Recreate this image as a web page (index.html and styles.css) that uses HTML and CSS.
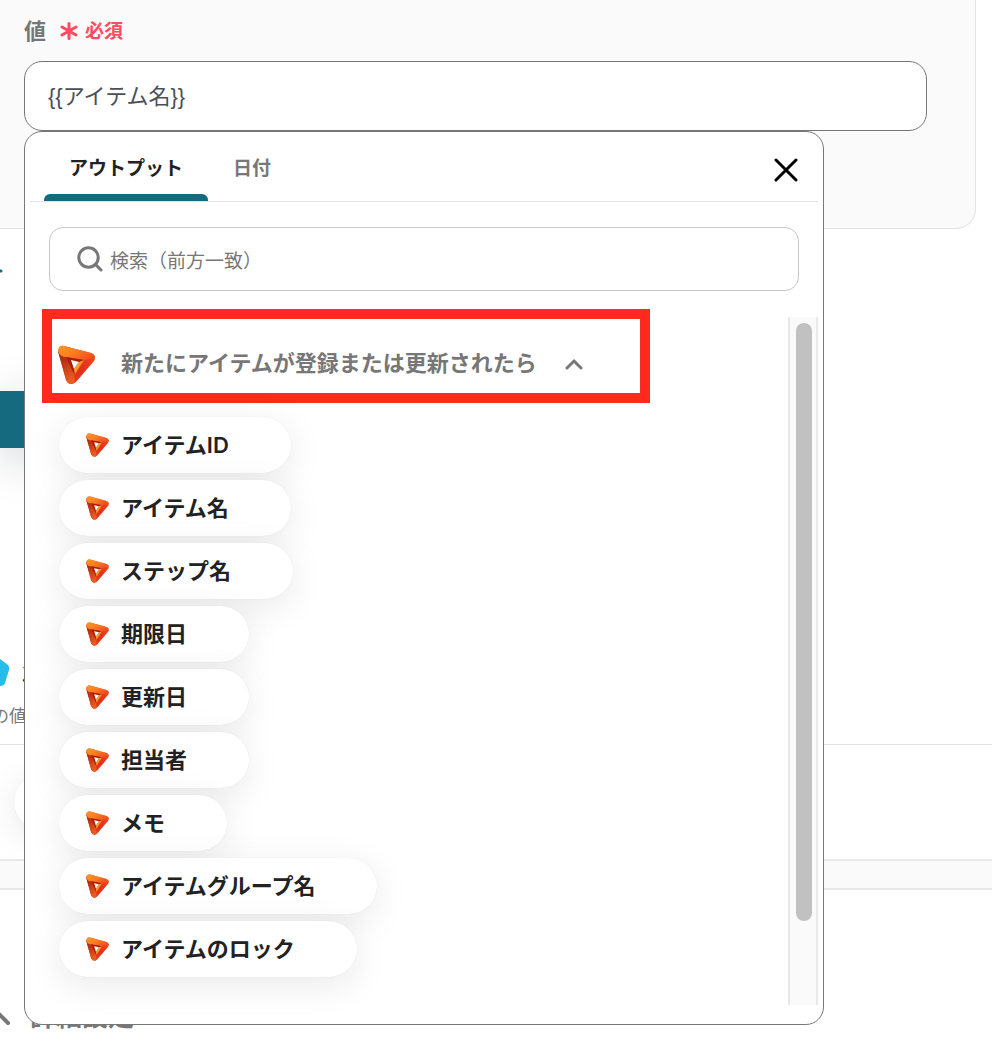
FILE: index.html
```html
<!DOCTYPE html>
<html lang="ja">
<head>
    <meta charset="UTF-8">
    <meta name="viewport" content="width=device-width, initial-scale=1.0">
    <title>アウトプット</title>
    <link rel="stylesheet" href="styles.css">
</head>
<body>
    <svg class="defs" aria-hidden="true">
        <defs>
            <linearGradient id="top" x1="0" y1="0" x2="1" y2="0.6">
                <stop offset="0" stop-color="#fb9a22"/>
                <stop offset="0.5" stop-color="#fa7f20"/>
                <stop offset="1" stop-color="#f2501f"/>
            </linearGradient>
            <linearGradient id="left" x1="0" y1="0" x2="0.3" y2="1">
                <stop offset="0" stop-color="#a81c0c"/>
                <stop offset="0.4" stop-color="#bd3313"/>
                <stop offset="1" stop-color="#e85c20"/>
            </linearGradient>
            <linearGradient id="right" x1="1" y1="0" x2="0" y2="1">
                <stop offset="0" stop-color="#f2501f"/>
                <stop offset="0.5" stop-color="#e2301b"/>
                <stop offset="1" stop-color="#e2451d"/>
            </linearGradient>
            <symbol id="logo" viewBox="0 0 39 41">
                <path d="M1 6Q2 0 7 1L34 8Q40 11 37 16L19 37Q13 42 9 35Z" fill="url(#right)"/>
                <path d="M1 6L9 11L17 28L18 37Q12 42 9 35Z" fill="url(#left)"/>
                <path d="M1 6Q2 0 7 1L34 8Q38 9 38 13L27 15L9 12Q3 12 1 6Z" fill="url(#top)"/>
                <path d="M9 12L27 15L23 18L14 15L17 24L17 29Z" fill="#a81e0d"/>
                <path d="M14 15L22 17L17 24Z" fill="#fff"/>
                <path d="M27 15L18 29L17 24L22 17Z" fill="#f99b28"/>
            </symbol>
        </defs>
    </svg>

    <section class="card">
        <div class="label">
            <label for="value">値</label>
            <svg class="star" viewBox="0 0 18 18"><path d="M9 1.5V16.5M2 5l14 8M16 5L2 13"/></svg>
            <span class="required">必須</span>
        </div>
        <div class="field">
            <input id="value" class="value" type="text" value="{{アイテム名}}">

            <div class="dropdown">
                <div class="tabs">
                    <button class="tab active" type="button">アウトプット</button>
                    <button class="tab" type="button">日付</button>
                    <button class="close" type="button" aria-label="閉じる">
                        <svg viewBox="0 0 24 24"><path d="M2 2L22 22M22 2L2 22"/></svg>
                    </button>
                </div>
                <label class="search">
                    <svg viewBox="0 0 26 26"><circle cx="11.5" cy="11.5" r="9.7"/><path d="M18.5 18.5L24 24"/></svg>
                    <input type="text" placeholder="検索（前方一致）" aria-label="検索">
                </label>
                <div class="outputs">
                    <div class="list">
                        <button class="group" type="button">
                            <svg class="group-logo"><use href="#logo"/></svg>
                            <span>新たにアイテムが登録または更新されたら</span>
                            <svg class="chevron" viewBox="0 0 18 12"><path d="M2 10L9 3L16 10"/></svg>
                        </button>
                        <div class="items">
                            <button class="item" type="button"><svg><use href="#logo"/></svg><span>アイテムID</span></button>
                            <button class="item" type="button"><svg><use href="#logo"/></svg><span>アイテム名</span></button>
                            <button class="item" type="button"><svg><use href="#logo"/></svg><span>ステップ名</span></button>
                            <button class="item" type="button"><svg><use href="#logo"/></svg><span>期限日</span></button>
                            <button class="item" type="button"><svg><use href="#logo"/></svg><span>更新日</span></button>
                            <button class="item" type="button"><svg><use href="#logo"/></svg><span>担当者</span></button>
                            <button class="item" type="button"><svg><use href="#logo"/></svg><span>メモ</span></button>
                            <button class="item" type="button"><svg><use href="#logo"/></svg><span>アイテムグループ名</span></button>
                            <button class="item" type="button"><svg><use href="#logo"/></svg><span>アイテムのロック</span></button>
                        </div>
                    </div>
                    <div class="track"><div class="thumb"></div></div>
                </div>
            </div>
        </div>
    </section>

    <section class="actions">
        <svg class="add" viewBox="0 0 3 4"><path d="M0 2H1"/></svg>
        <button class="save" type="button" aria-label="保存"></button>
    </section>
    <section class="operation">
        <div class="operation-title">
            <svg class="badge" viewBox="0 0 10 30"><path d="M0 1L8 7Q10 9 9 12L5 25Q4 28 0 28Z"/></svg>
            <span>次</span>
        </div>
        <p class="note">の値</p>
    </section>
    <section class="step">
        <div class="pill"></div>
    </section>
    <div class="divider"></div>
    <section class="details">
        <svg viewBox="0 0 12 20"><path d="M-4 4L8 16"/></svg>
        <h2>詳細設定</h2>
    </section>
</body>
</html>
```
FILE: styles.css
```css
* {
    box-sizing: border-box;
}
body {
    margin: 0;
    background-color: #fff;
    color: #222;
    font-family: "Liberation Sans", "Noto Sans CJK JP", sans-serif;
    overflow-x: hidden;
}
button, input {
    font-family: inherit;
}
button {
    border: none;
    background: none;
    cursor: pointer;
}
.defs {
    position: absolute;
    width: 0;
    height: 0;
}

/* value field */
.card {
    height: 229px;
    margin-right: 16px;
    padding: 12px 48px 0 24px;
    background-color: #fafafa;
    border: 1px solid #e3e3e3;
    border-width: 0 1px 1px 0;
    border-radius: 0 0 20px 0;
}
.label {
    display: flex;
    align-items: center;
    height: 34px;
    margin-bottom: 15px;
    color: #777;
    font-size: 22px;
    font-weight: bold;
}
.star {
    width: 18px;
    height: 18px;
    margin: 4px 7px 0 14px;
    fill: none;
    stroke: #ff4b5f;
    stroke-width: 3;
    stroke-linecap: round;
}
.required {
    color: #ff4b5f;
    font-size: 19px;
}
.field {
    position: relative;
}
.value {
    display: block;
    width: 100%;
    height: 70px;
    padding: 0 23px 5px;
    border: 1px solid #777;
    border-radius: 18px;
    background-color: #fff;
    color: #4a5058;
    font-size: 22px;
}

/* dropdown */
.dropdown {
    position: absolute;
    top: 100%;
    left: 0;
    z-index: 1;
    width: 100%;
    max-width: 800px;
    padding: 0 5px 19px;
    background-color: #fff;
    border: 1px solid #777;
    border-radius: 18px;
}
.tabs {
    display: flex;
    height: 70px;
    padding: 0 16px 0 14px;
    border-bottom: 1px solid #e3e3e3;
}
.tab {
    display: flex;
    flex-direction: column;
    justify-content: space-between;
    padding: 21px 25px 0;
    color: #777;
    font-size: 19px;
    font-weight: bold;
}
.active {
    color: #222;
}
.active::after {
    content: "";
    align-self: stretch;
    height: 7px;
    margin: 0 -25px;
    background-color: #156a80;
    border-radius: 6px 6px 0 0;
}
.close {
    margin-left: auto;
    padding: 6px 4px 0;
}
.close svg {
    display: block;
    width: 24px;
    height: 24px;
    fill: none;
    stroke: #000;
    stroke-width: 3;
    stroke-linecap: round;
}
.search {
    display: flex;
    align-items: center;
    height: 64px;
    margin: 25px 19px 26px;
    padding: 0 27px;
    border: 1px solid #c8c8c8;
    border-radius: 14px;
}
.search svg {
    flex: none;
    width: 26px;
    height: 26px;
    fill: none;
    stroke: #777;
    stroke-width: 3;
    stroke-linecap: round;
}
.search input {
    flex: 1;
    min-width: 0;
    padding: 5px 7px 0;
    border: none;
    outline: none;
    background: none;
    color: #777;
    font-size: 19px;
}
.search input::placeholder {
    color: #777;
}
.outputs {
    display: flex;
}
.list {
    flex: 1;
    min-width: 0;
    padding: 0 12px 28px;
}
.group {
    display: flex;
    align-items: center;
    width: 608px;
    max-width: 100%;
    height: 94px;
    margin-top: -8px;
    padding: 0 5px;
    border: 10px solid #ff2a1d;
    color: #777;
    font-size: 22px;
    font-weight: bold;
    white-space: nowrap;
}
.group-logo {
    width: 39px;
    height: 41px;
    margin: 18px 25px 0 0;
}
.group span {
    padding-top: 9px;
}
.chevron {
    width: 18px;
    height: 12px;
    margin: 16px 0 0 28px;
    fill: none;
    stroke: #777;
    stroke-width: 3;
    stroke-linecap: round;
}
.items {
    display: flex;
    flex-direction: column;
    align-items: flex-start;
    gap: 7px;
    padding: 14px 17px 0;
}
.item {
    display: flex;
    align-items: center;
    height: 56px;
    padding: 0 62px 0 26px;
    border-radius: 28px;
    background-color: #fff;
    box-shadow: 0 8px 36px rgba(0, 0, 0, 0.09), 0 0 1px rgba(0, 0, 0, 0.1);
    color: #222;
    font-family: Inter, "Noto Sans CJK JP", sans-serif;
    font-size: 22px;
    font-weight: 600;
    white-space: nowrap;
}
.item svg {
    width: 25px;
    height: 25px;
    margin-right: 11px;
}
.item span {
    padding-bottom: 4px;
}
.track {
    flex: none;
    width: 30px;
    padding: 6px;
    border: 2px solid #e8e8e8;
    border-width: 0 2px;
    background-color: #fafafa;
}
.thumb {
    width: 16px;
    height: 598px;
    margin: 0 auto;
    border-radius: 8px;
    background-color: #c1c1c1;
}

/* page under the dropdown */
.actions {
    height: 429px;
    padding-top: 40px;
}
.add {
    display: block;
    width: 3px;
    height: 4px;
    fill: none;
    stroke: #156a80;
    stroke-width: 3;
    stroke-linecap: round;
}
.save {
    display: block;
    width: 200px;
    height: 57px;
    margin-top: 118px;
    background-color: #156a80;
    box-shadow: 0 10px 50px rgba(0, 30, 40, 0.18);
}
.operation {
    height: 87px;
    border-bottom: 1px solid #e3e3e3;
}
.operation-title {
    display: flex;
    align-items: center;
    gap: 12px;
    height: 30px;
    font-size: 22px;
    font-weight: bold;
}
.badge {
    width: 10px;
    height: 30px;
    fill: #27bdea;
}
.note {
    margin: 16px 0 0 -8px;
    color: #777;
    font-size: 17px;
    line-height: 26px;
}
.step {
    height: 114px;
    padding: 29px 14px;
}
.pill {
    width: 240px;
    height: 56px;
    border-radius: 28px;
    box-shadow: 0 8px 36px rgba(0, 0, 0, 0.09), 0 0 1px rgba(0, 0, 0, 0.1);
}
.divider {
    height: 31px;
    border: 2px solid #e8e8e8;
    border-width: 2px 0;
    background-color: #fafafa;
}
.details {
    display: flex;
    align-items: center;
    height: 168px;
    padding-top: 86px;
    color: #777;
}
.details svg {
    width: 12px;
    height: 20px;
    fill: none;
    stroke: #777;
    stroke-width: 4;
    stroke-linecap: round;
}
.details h2 {
    margin: 0 0 0 18px;
    font-size: 26px;
    line-height: 36px;
}
```
